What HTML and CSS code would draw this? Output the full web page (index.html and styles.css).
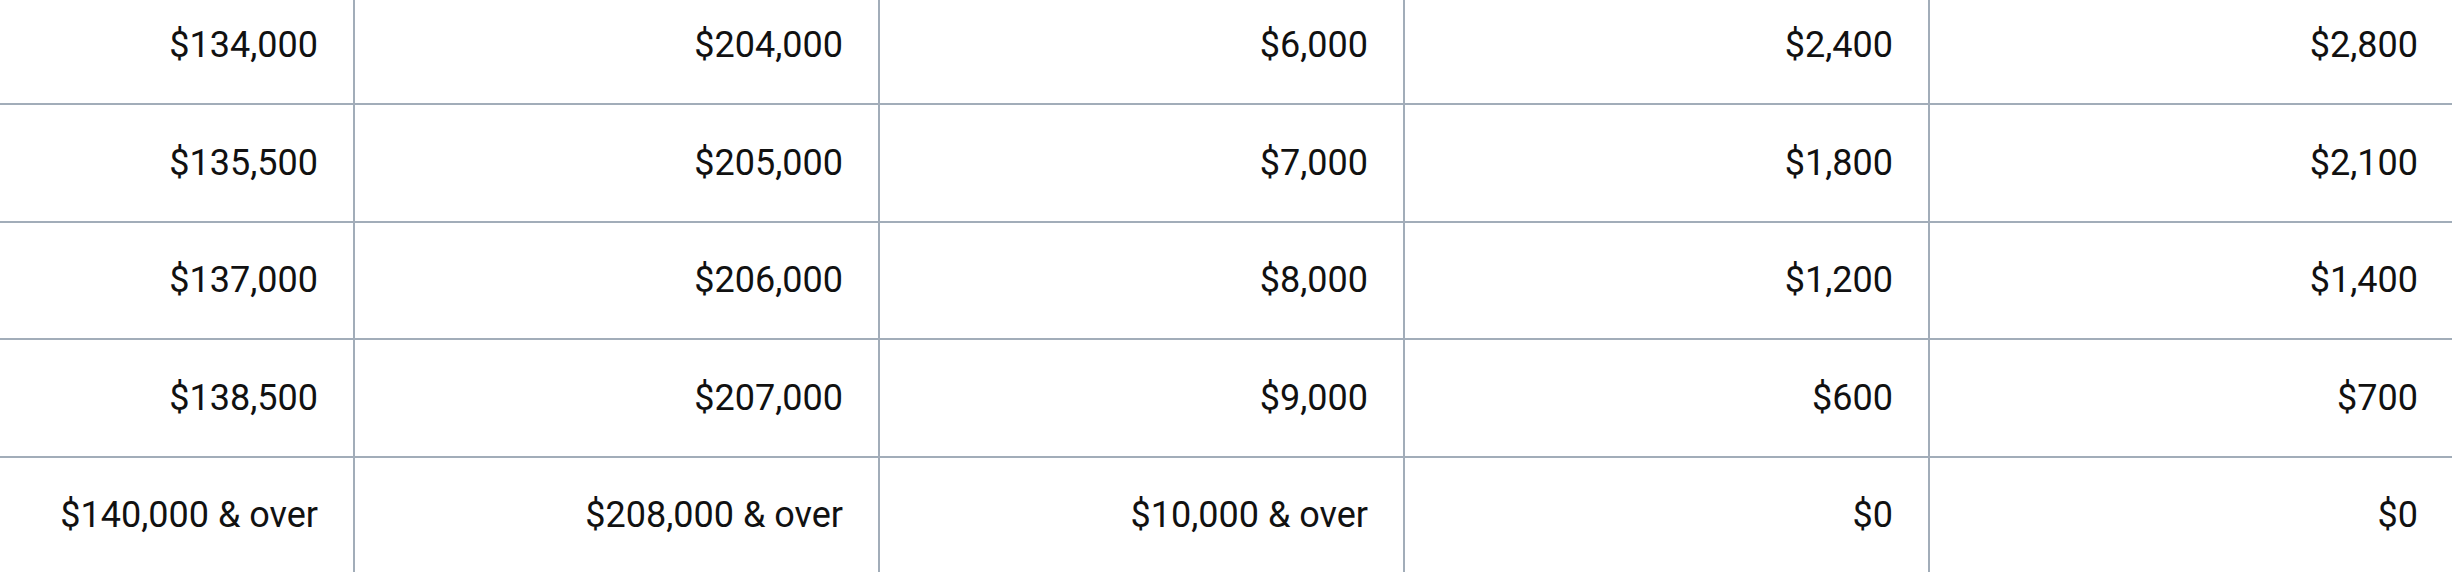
FILE: index.html
```html
<!DOCTYPE html>
<html lang="en">
<head>
<meta charset="utf-8">
<title>Table</title>
<link rel="stylesheet" href="styles.css">
</head>
<body>
<div class="viewport">
  <div class="grid">
    <div class="cell">$134,000</div><div class="cell">$204,000</div><div class="cell">$6,000</div><div class="cell">$2,400</div><div class="cell">$2,800</div>
    <div class="cell">$135,500</div><div class="cell">$205,000</div><div class="cell">$7,000</div><div class="cell">$1,800</div><div class="cell">$2,100</div>
    <div class="cell">$137,000</div><div class="cell">$206,000</div><div class="cell">$8,000</div><div class="cell">$1,200</div><div class="cell">$1,400</div>
    <div class="cell">$138,500</div><div class="cell">$207,000</div><div class="cell">$9,000</div><div class="cell">$600</div><div class="cell">$700</div>
    <div class="cell">$140,000 &amp; over</div><div class="cell">$208,000 &amp; over</div><div class="cell">$10,000 &amp; over</div><div class="cell">$0</div><div class="cell">$0</div>
  </div>
</div>
</body>
</html>
```
FILE: styles.css
```css
html, body {
  margin: 0;
  padding: 0;
  background: #ffffff;
}
.viewport {
  width: 2452px;
  height: 572px;
  overflow: hidden;
}
.grid {
  display: grid;
  grid-template-columns: repeat(5, 525px);
  grid-auto-rows: 117.5px;
  margin-left: -170px;
  margin-top: -12.5px;
  font-family: Roboto, "Liberation Sans", Arial, sans-serif;
  font-size: 36px;
  color: #111111;
}
.cell {
  box-sizing: border-box;
  border-right: 2px solid #a2adb9;
  border-bottom: 2px solid #a2adb9;
  display: flex;
  align-items: center;
  justify-content: flex-end;
  padding-right: 35px;
  white-space: nowrap;
}
```
